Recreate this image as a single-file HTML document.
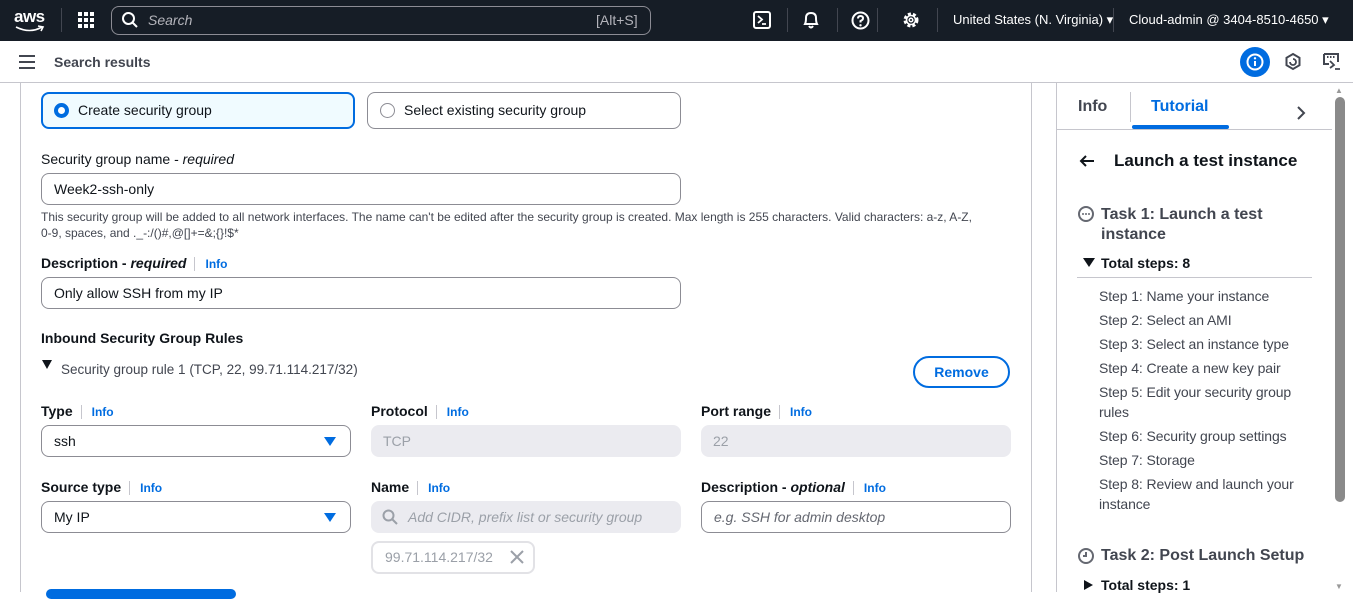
<!DOCTYPE html><html><head><style>
*{box-sizing:border-box;margin:0;padding:0}
body{width:1353px;height:592px;overflow:hidden;background:#fff;font-family:"Liberation Sans",sans-serif;color:#0f141a;position:relative}
.a{position:absolute;white-space:nowrap}
.top{position:absolute;left:0;top:0;width:1353px;height:41px;background:#161d26;color:#fff}
.sep{position:absolute;top:8px;width:1px;height:24px;background:#424650}
.inp{position:absolute;height:32px;border:1px solid #8c8c94;border-radius:8px;font-size:14px;padding:0 12px;line-height:30px}
.dis{position:absolute;height:32px;background:#ebebf0;border-radius:8px;font-size:14px;padding:0 12px;line-height:32px;color:#9ba0a8}
.lbl{position:absolute;font-size:14px;font-weight:bold;white-space:nowrap}
.info{color:#006ce0;font-size:12px;font-weight:bold;border-left:1px solid #c6c6cd;padding-left:10px;margin-left:8px}
.caret{position:absolute;width:0;height:0;border-left:6px solid transparent;border-right:6px solid transparent;border-top:9px solid #006ce0}
.step{position:absolute;left:1099px;font-size:14px;color:#424650;white-space:nowrap;letter-spacing:-.1px}
</style></head><body>
<div class="top">
<div class="a" style="left:14px;top:7px;font-size:17px;font-weight:bold;letter-spacing:-.5px">aws</div>
<svg class="a" style="left:14px;top:25px" width="32" height="8"><path d="M2 2 Q16 9 28 2 M24 1 L29 2 L27 6" stroke="#fff" stroke-width="1.6" fill="none"/></svg>
<div class="sep" style="left:61px"></div>
<svg class="a" style="left:78px;top:12px" width="16" height="16" fill="#fff"><rect x="0" y="0" width="4" height="4"/><rect x="6" y="0" width="4" height="4"/><rect x="12" y="0" width="4" height="4"/><rect x="0" y="6" width="4" height="4"/><rect x="6" y="6" width="4" height="4"/><rect x="12" y="6" width="4" height="4"/><rect x="0" y="12" width="4" height="4"/><rect x="6" y="12" width="4" height="4"/><rect x="12" y="12" width="4" height="4"/></svg>
<div class="a" style="left:111px;top:6px;width:540px;height:29px;border:1px solid #8c8c94;border-radius:8px"></div>
<svg class="a" style="left:121px;top:11px" width="18" height="18"><circle cx="7.5" cy="7.5" r="5.5" stroke="#fff" stroke-width="2" fill="none"/><path d="M11.5 11.5 L16 16" stroke="#fff" stroke-width="2"/></svg>
<div class="a" style="left:148px;top:12px;font-size:14px;font-style:italic;color:#b4b4bb">Search</div>
<div class="a" style="left:596px;top:12px;font-size:14px;color:#b4b4bb">[Alt+S]</div>
<svg class="a" style="left:753px;top:11px" width="18" height="18"><rect x="1" y="1" width="16" height="16" rx="2" stroke="#fff" stroke-width="2" fill="none"/><path d="M5 5 L9 8.5 L5 12 M9 13 H13" stroke="#fff" stroke-width="1.8" fill="none"/></svg>
<div class="sep" style="left:787px"></div>
<svg class="a" style="left:802px;top:10px" width="18" height="20"><path d="M3 14 Q4 12 4 8 Q4 3 9 3 Q14 3 14 8 Q14 12 15 14 Z M7 16 Q9 19 11 16" stroke="#fff" stroke-width="2" fill="none"/></svg>
<div class="sep" style="left:837px"></div>
<svg class="a" style="left:851px;top:11px" width="19" height="19"><circle cx="9.5" cy="9.5" r="8" stroke="#fff" stroke-width="2" fill="none"/><path d="M7 7.5 Q7 5 9.5 5 Q12 5 12 7.3 Q12 9 9.5 10 V11.5" stroke="#fff" stroke-width="2" fill="none"/><circle cx="9.5" cy="14.3" r="1.2" fill="#fff"/></svg>
<div class="sep" style="left:877px"></div>
<svg class="a" style="left:902px;top:11px" width="18" height="18"><circle cx="9" cy="9" r="6" stroke="#fff" stroke-width="3" stroke-dasharray="3 2" fill="none"/><circle cx="9" cy="9" r="4.5" stroke="#fff" stroke-width="1.6" fill="none"/><circle cx="9" cy="9" r="1.8" stroke="#fff" stroke-width="1.5" fill="none"/></svg>
<div class="sep" style="left:937px"></div>
<div class="a" style="left:953px;top:12px;font-size:13px">United States (N. Virginia) ▾</div>
<div class="sep" style="left:1113px"></div>
<div class="a" style="left:1129px;top:12px;font-size:13px">Cloud-admin @ 3404-8510-4650 ▾</div>
</div>
<div class="a" style="left:0;top:82px;width:1353px;height:1px;background:#c6c6cd"></div>
<svg class="a" style="left:19px;top:55px" width="16" height="14"><path d="M0 1H16M0 7H16M0 13H16" stroke="#424650" stroke-width="2"/></svg>
<div class="a" style="left:54px;top:54px;font-size:14px;font-weight:bold;color:#424650">Search results</div>
<div class="a" style="left:1240px;top:47px;width:30px;height:30px;border-radius:50%;background:#006ce0"></div>
<svg class="a" style="left:1245px;top:52px" width="20" height="20"><circle cx="10" cy="10" r="7.5" stroke="#fff" stroke-width="2" fill="none"/><path d="M10 9V14" stroke="#fff" stroke-width="2"/><circle cx="10" cy="6.3" r="1.2" fill="#fff"/></svg>
<svg class="a" style="left:1284px;top:52px" width="18" height="20"><path d="M9 2 L15.5 5.8 V13.2 L9 17 L2.5 13.2 V5.8 Z" stroke="#424650" stroke-width="2" fill="none"/><path d="M6 10 A3 3 0 1 0 9 7" stroke="#424650" stroke-width="1.8" fill="none"/></svg>
<svg class="a" style="left:1322px;top:52px" width="20" height="20"><path d="M2 2 H16 V10 M2 2 V12 H7" stroke="#424650" stroke-width="2" fill="none"/><path d="M5 5H13" stroke="#424650" stroke-width="2" stroke-dasharray="1.5 1.5"/><path d="M8 9 L12 13 L8 16 M13 17 H18" stroke="#424650" stroke-width="1.8" fill="none"/></svg>
<div class="a" style="left:20px;top:83px;width:1px;height:509px;background:#c6c6cd"></div>
<div class="a" style="left:1031px;top:83px;width:1px;height:509px;background:#c6c6cd"></div>
<div class="a" style="left:1056px;top:83px;width:1px;height:509px;background:#c6c6cd"></div>

<div class="a" style="left:41px;top:92px;width:314px;height:37px;border:2px solid #006ce0;border-radius:8px;background:#f0fbff"></div>
<div class="a" style="left:54px;top:103px;width:15px;height:15px;border-radius:50%;border:4px solid #006ce0;background:#fff"></div>
<div class="a" style="left:78px;top:102px;font-size:14px">Create security group</div>
<div class="a" style="left:367px;top:92px;width:314px;height:37px;border:1px solid #8c8c94;border-radius:8px"></div>
<div class="a" style="left:380px;top:103px;width:15px;height:15px;border-radius:50%;border:1px solid #8c8c94"></div>
<div class="a" style="left:404px;top:102px;font-size:14px">Select existing security group</div>

<div class="a" style="left:41px;top:151px;font-size:14px">Security group name - <i>required</i></div>
<div class="inp" style="left:41px;top:173px;width:640px">Week2-ssh-only</div>
<div class="a" style="left:41px;top:209px;font-size:12px;color:#424650;line-height:16px">This security group will be added to all network interfaces. The name can't be edited after the security group is created. Max length is 255 characters. Valid characters: a-z, A-Z,<br>0-9, spaces, and ._-:/()#,@[]+=&amp;;{}!$*</div>
<div class="lbl" style="left:41px;top:255px">Description - <i>required</i><span class="info">Info</span></div>
<div class="inp" style="left:41px;top:277px;width:640px">Only allow SSH from my IP</div>
<div class="lbl" style="left:41px;top:330px">Inbound Security Group Rules</div>
<div class="a" style="left:42px;top:360px;border-left:5px solid transparent;border-right:5px solid transparent;border-top:9px solid #0f141a"></div>
<div class="a" style="left:61px;top:362px;font-size:13.5px;color:#424650">Security group rule 1 (TCP, 22, 99.71.114.217/32)</div>
<div class="a" style="left:913px;top:356px;width:97px;height:32px;border:2px solid #006ce0;border-radius:16px;color:#006ce0;font-weight:bold;font-size:14px;text-align:center;line-height:28px">Remove</div>

<div class="lbl" style="left:41px;top:403px">Type<span class="info">Info</span></div>
<div class="inp" style="left:41px;top:425px;width:310px">ssh</div><div class="caret" style="left:324px;top:437px"></div>
<div class="lbl" style="left:371px;top:403px">Protocol<span class="info">Info</span></div>
<div class="dis" style="left:371px;top:425px;width:310px">TCP</div>
<div class="lbl" style="left:701px;top:403px">Port range<span class="info">Info</span></div>
<div class="dis" style="left:701px;top:425px;width:310px">22</div>

<div class="lbl" style="left:41px;top:479px">Source type<span class="info">Info</span></div>
<div class="inp" style="left:41px;top:501px;width:310px">My IP</div><div class="caret" style="left:324px;top:513px"></div>
<div class="lbl" style="left:371px;top:479px">Name<span class="info">Info</span></div>
<div class="dis" style="left:371px;top:501px;width:310px;padding-left:37px;font-style:italic">Add CIDR, prefix list or security group</div>
<svg class="a" style="left:382px;top:509px" width="16" height="16"><circle cx="6.5" cy="6.5" r="5" stroke="#9ba0a8" stroke-width="2" fill="none"/><path d="M10 10L15 15" stroke="#9ba0a8" stroke-width="2"/></svg>
<div class="lbl" style="left:701px;top:479px">Description - <i>optional</i><span class="info">Info</span></div>
<div class="inp" style="left:701px;top:501px;width:310px;font-style:italic;color:#656871">e.g. SSH for admin desktop</div>
<div class="a" style="left:371px;top:541px;width:164px;height:33px;border:2px solid #e2e2e6;border-radius:8px;font-size:14px;color:#9ba0a8;padding-left:12px;line-height:29px">99.71.114.217/32</div>
<svg class="a" style="left:509px;top:549px" width="16" height="16"><path d="M2 2L14 14M14 2L2 14" stroke="#9ba0a8" stroke-width="2"/></svg>
<div class="a" style="left:46px;top:589px;width:190px;height:10px;border-radius:16px;background:#006ce0"></div>

<div class="a" style="left:1078px;top:98px;font-size:16px;font-weight:bold;color:#424650">Info</div>
<div class="a" style="left:1130px;top:92px;width:1px;height:30px;background:#c6c6cd"></div>
<div class="a" style="left:1151px;top:98px;font-size:16px;font-weight:bold;color:#006ce0">Tutorial</div>
<div class="a" style="left:1132px;top:125px;width:97px;height:4px;border-radius:2px;background:#006ce0"></div>
<div class="a" style="left:1057px;top:129px;width:275px;height:1px;background:#c6c6cd"></div>
<svg class="a" style="left:1295px;top:105px" width="12" height="16"><path d="M3 2L9 8L3 14" stroke="#424650" stroke-width="2" fill="none"/></svg>
<div class="a" style="left:1335px;top:97px;width:10px;height:405px;border-radius:5px;background:#8a8a8a"></div>
<div class="a" style="left:1335px;top:86px;font-size:8px;color:#999">▲</div>
<div class="a" style="left:1335px;top:582px;font-size:8px;color:#999">▼</div>
<svg class="a" style="left:1078px;top:153px" width="18" height="16"><path d="M16 8H3M8 3L3 8L8 13" stroke="#0f141a" stroke-width="2" fill="none"/></svg>
<div class="a" style="left:1114px;top:151px;font-size:17px;font-weight:bold">Launch a test instance</div>
<svg class="a" style="left:1077px;top:205px" width="18" height="18"><circle cx="9" cy="9" r="7" stroke="#656871" stroke-width="2" fill="none"/><circle cx="6" cy="9" r="1" fill="#656871"/><circle cx="9" cy="9" r="1" fill="#656871"/><circle cx="12" cy="9" r="1" fill="#656871"/></svg>
<div class="a" style="left:1101px;top:205px;font-size:16px;font-weight:bold;color:#424650;line-height:20px">Task 1: Launch a test<br>instance</div>
<div class="a" style="left:1083px;top:258px;border-left:6px solid transparent;border-right:6px solid transparent;border-top:9px solid #0f141a"></div>
<div class="a" style="left:1101px;top:255px;font-size:14px;font-weight:bold">Total steps: 8</div>
<div class="a" style="left:1077px;top:277px;width:235px;height:1px;background:#c6c6cd"></div>
<div class="step" style="top:288px">Step 1: Name your instance</div>
<div class="step" style="top:312px">Step 2: Select an AMI</div>
<div class="step" style="top:336px">Step 3: Select an instance type</div>
<div class="step" style="top:360px">Step 4: Create a new key pair</div>
<div class="step" style="top:382px;line-height:20px">Step 5: Edit your security group<br>rules</div>
<div class="step" style="top:428px">Step 6: Security group settings</div>
<div class="step" style="top:452px">Step 7: Storage</div>
<div class="step" style="top:474px;line-height:20px">Step 8: Review and launch your<br>instance</div>
<svg class="a" style="left:1077px;top:547px" width="18" height="18"><circle cx="9" cy="9" r="7" stroke="#656871" stroke-width="2" fill="none"/><path d="M9 5V9H6" stroke="#656871" stroke-width="2" fill="none"/></svg>
<div class="a" style="left:1101px;top:547px;font-size:16px;font-weight:bold;color:#424650">Task 2: Post Launch Setup</div>
<div class="a" style="left:1084px;top:580px;border-top:5px solid transparent;border-bottom:5px solid transparent;border-left:9px solid #0f141a"></div>
<div class="a" style="left:1101px;top:577px;font-size:14px;font-weight:bold">Total steps: 1</div>
</body></html>
